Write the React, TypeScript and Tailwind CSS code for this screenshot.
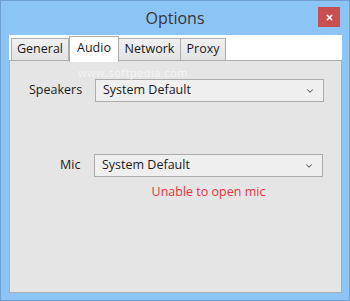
import { ChevronDown, X } from "lucide-react";

const font = { fontFamily: '"Open Sans", "Noto Sans", sans-serif' };

const tabs = [
  { label: "General", w: "w-[58px]" },
  { label: "Audio", w: "w-[50px]", active: true },
  { label: "Network", w: "w-[63px]" },
  { label: "Proxy", w: "w-[46px]" },
];

const Select = ({ value }: { value: string }) => (
  <div className="flex items-center justify-between w-[229px] h-[23px] bg-[#efefef] border border-[#acacac] pl-[7px] pr-[8px] text-[12.5px] text-[#1a1a1a]">
    <span>{value}</span>
    <ChevronDown size={10} strokeWidth={2.5} className="text-[#606060]" />
  </div>
);

export default function App() {
  return (
    <div
      style={font}
      className="w-[350px] h-[301px] bg-[#8cc4f6] border border-[#6f9fcf] flex flex-col"
    >
      <div className="relative h-[34px] flex items-center justify-center">
        <span className="text-[16px] text-[#353535]">Options</span>
        <div className="absolute right-[9px] top-[6px] w-[22px] h-[20px] bg-[#c84f4f] flex items-center justify-center">
          <X size={9} strokeWidth={4} className="text-white" />
        </div>
      </div>

      <div className="ml-[8px] w-[333px] h-[258px] bg-white flex flex-col relative">
        <div className="h-[25px] flex items-end pl-[2px]">
          {tabs.map((t) =>
            t.active ? (
              <div
                key={t.label}
                className={`${t.w} h-[26px] -mb-[2px] bg-white border border-b-0 border-[#acacac] z-10 flex items-start justify-center pt-[2px] text-[12.5px] text-[#1a1a1a]`}
              >
                {t.label}
              </div>
            ) : (
              <div
                key={t.label}
                className={`${t.w} h-[22px] bg-gradient-to-b from-[#f0f0f0] to-[#e3e3e3] border border-b-0 border-[#acacac] -ml-px first:ml-0 flex items-center justify-center text-[12.5px] text-[#1a1a1a]`}
              >
                {t.label}
              </div>
            )
          )}
        </div>

        <div className="flex-1 bg-[#e5e5e5] border border-[#adadad] flex flex-col pt-[18px]">
          <div className="flex items-center ml-[19px]">
            <span className="w-[66px] text-[12.5px] text-[#1a1a1a]">Speakers</span>
            <Select value="System Default" />
          </div>

          <div className="flex items-center ml-[50px] mt-[52px]">
            <span className="w-[34px] text-[12.5px] text-[#1a1a1a]">Mic</span>
            <Select value="System Default" />
          </div>

          <div className="ml-[84px] w-[229px] mt-[6px] text-center text-[12.5px] text-[#e8333f]">
            Unable to open mic
          </div>
        </div>

        <span className="absolute left-[69px] top-[30px] text-[11px] text-white/60 tracking-[0.5px] pointer-events-none">
          www.softpedia.com
        </span>
      </div>
    </div>
  );
}
